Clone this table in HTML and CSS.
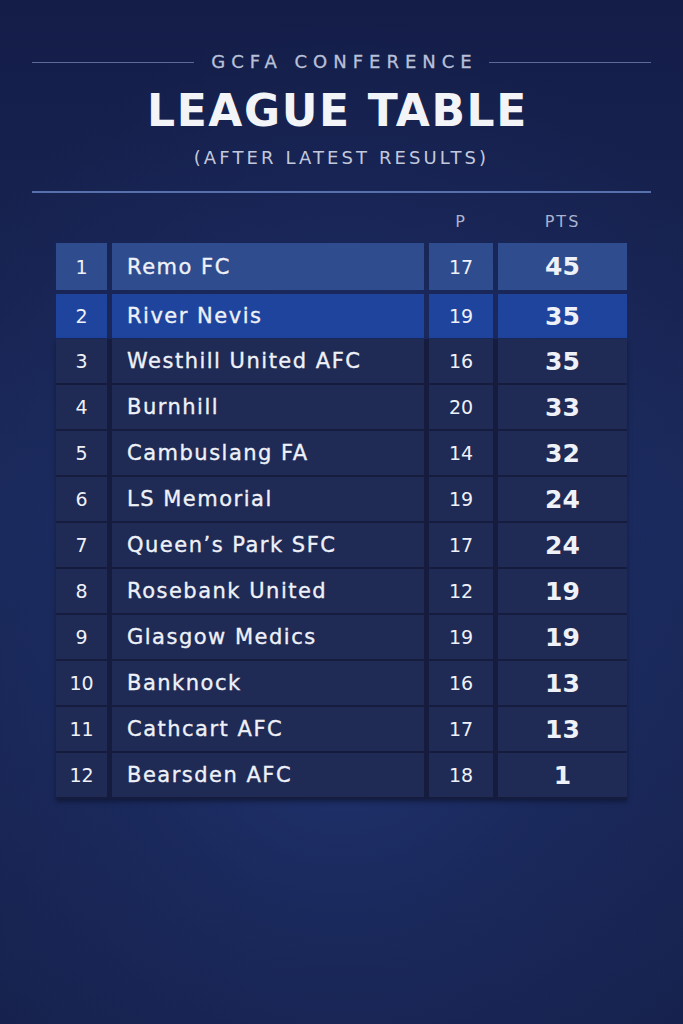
FILE: index.html
```html
<!DOCTYPE html>
<html lang="en">
<head>
<meta charset="utf-8">
<title>League Table</title>
<link rel="stylesheet" href="styles.css">
</head>
<body>
<main class="page">
  <header class="head">
    <div class="kicker">
      <span class="kicker-line"></span>
      <span class="kicker-text">GCFA CONFERENCE</span>
      <span class="kicker-line"></span>
    </div>
    <h1 class="title">LEAGUE TABLE</h1>
    <p class="subtitle">(AFTER LATEST RESULTS)</p>
    <hr class="rule">
  </header>

  <section class="table">
    <div class="row colhead">
      <span></span><span></span>
      <span class="ch">P</span>
      <span class="ch">PTS</span>
    </div>
    <div class="row first">
      <span class="cell rank">1</span><span class="cell name">Remo FC</span><span class="cell played">17</span><span class="cell pts">45</span>
    </div>
    <div class="row second">
      <span class="cell rank">2</span><span class="cell name">River Nevis</span><span class="cell played">19</span><span class="cell pts">35</span>
    </div>
    <div class="rest">
      <div class="row"><span class="cell rank">3</span><span class="cell name">Westhill United AFC</span><span class="cell played">16</span><span class="cell pts">35</span></div>
      <div class="row"><span class="cell rank">4</span><span class="cell name">Burnhill</span><span class="cell played">20</span><span class="cell pts">33</span></div>
      <div class="row"><span class="cell rank">5</span><span class="cell name">Cambuslang FA</span><span class="cell played">14</span><span class="cell pts">32</span></div>
      <div class="row"><span class="cell rank">6</span><span class="cell name">LS Memorial</span><span class="cell played">19</span><span class="cell pts">24</span></div>
      <div class="row"><span class="cell rank">7</span><span class="cell name">Queen’s Park SFC</span><span class="cell played">17</span><span class="cell pts">24</span></div>
      <div class="row"><span class="cell rank">8</span><span class="cell name">Rosebank United</span><span class="cell played">12</span><span class="cell pts">19</span></div>
      <div class="row"><span class="cell rank">9</span><span class="cell name">Glasgow Medics</span><span class="cell played">19</span><span class="cell pts">19</span></div>
      <div class="row"><span class="cell rank">10</span><span class="cell name">Banknock</span><span class="cell played">16</span><span class="cell pts">13</span></div>
      <div class="row"><span class="cell rank">11</span><span class="cell name">Cathcart AFC</span><span class="cell played">17</span><span class="cell pts">13</span></div>
      <div class="row"><span class="cell rank">12</span><span class="cell name">Bearsden AFC</span><span class="cell played">18</span><span class="cell pts">1</span></div>
    </div>
  </section>
</main>
</body>
</html>
```

FILE: styles.css
```css
* { box-sizing: border-box; }
html, body { margin: 0; padding: 0; }
body {
  width: 683px;
  height: 1024px;
  overflow: hidden;
  font-family: "DejaVu Sans", "Liberation Sans", sans-serif;
  color: #eef1f8;
  background:
    radial-gradient(ellipse 70% 60% at 50% 62%, rgba(36,60,128,0.75) 0%, rgba(30,48,108,0.4) 50%, rgba(20,28,66,0) 100%),
    linear-gradient(180deg, #141d48 0%, #1a2858 50%, #16214c 100%);
}
.page {
  display: flex;
  flex-direction: column;
  align-items: center;
  height: 1024px;
}
.head {
  width: 100%;
  display: flex;
  flex-direction: column;
  align-items: center;
  padding-top: 50px;
}
.kicker {
  display: flex;
  align-items: center;
  gap: 17px;
  height: 24px;
}
.kicker-line {
  width: 162px;
  height: 1px;
  background: rgba(118,138,190,0.7);
}
.kicker-text {
  font-size: 18px;
  letter-spacing: 6px;
  margin-right: -6px;
  color: #b9c1d9;
  line-height: 24px;
  -webkit-text-stroke: 0.3px #b9c1d9;
}
.title {
  margin: 12px 8px 0 0;
  font-size: 44px;
  font-weight: 700;
  line-height: 50px;
  letter-spacing: 1.6px;
  color: #f3f4f8;
}
.subtitle {
  margin: 10px 0 0;
  font-size: 18px;
  line-height: 24px;
  letter-spacing: 3.1px;
  color: #c3c9dd;
}
.rule {
  margin: 21px 0 0;
  width: 619px;
  height: 2px;
  border: 0;
  background: #5570ad;
}
.table {
  margin-top: 19px;
  width: 571px;
  display: flex;
  flex-direction: column;
}
.row {
  display: grid;
  grid-template-columns: 51px 312px 64px 129px;
  column-gap: 5px;
  height: 44px;
}
.colhead {
  height: 20px;
  margin-bottom: 11px;
}
.ch {
  text-align: center;
  font-size: 16px;
  line-height: 20px;
  letter-spacing: 2px;
  color: #aab3cf;
}
.cell {
  display: flex;
  align-items: center;
  justify-content: center;
  font-size: 19px;
  color: #eef1f8;
}
.cell.name {
  justify-content: flex-start;
  padding-left: 15px;
  font-size: 21px;
  letter-spacing: 1.5px;
  -webkit-text-stroke: 0.35px #eef1f8;
}
.cell.pts {
  font-size: 25px;
  font-weight: 700;
}
.first { height: 47px; }
.first .cell { background: #2f4c8e; }
.second { margin-top: 4px; }
.second .cell { background: #1f449e; }
.rest {
  margin-top: 1px;
  display: flex;
  flex-direction: column;
  gap: 2px;
  background: #151c3d;
  padding-bottom: 2px;
  box-shadow: 0 3px 4px rgba(10,14,34,0.5);
}
.rest .row { height: 44px; }
.rest .cell { background: #1f2a55; }
```
